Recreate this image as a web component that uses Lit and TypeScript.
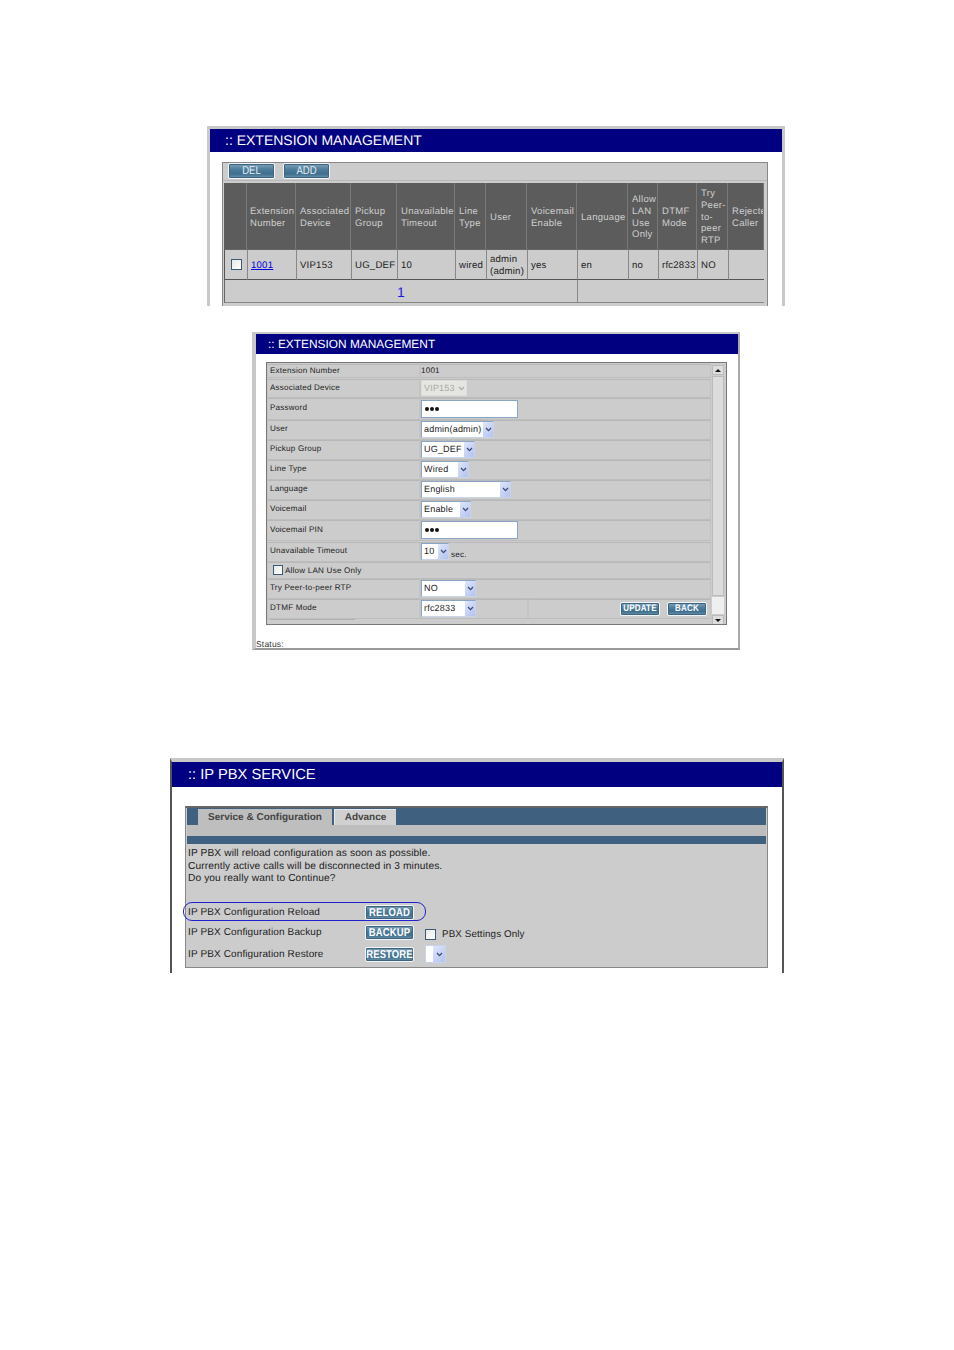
import { LitElement, html, css, TemplateResult } from "lit";
import { customElement } from "lit/decorators.js";

const chevron = html`<svg class="chev" viewBox="0 0 8 6" width="8" height="6"><path d="M1 1.2 L4 4.4 L7 1.2" fill="none" stroke="#3a4a78" stroke-width="1.5"/></svg>`;

function sel(text: string, w: number, h: number, disabled = false) {
  return html`<div class="sel ${disabled ? "off" : ""}" style="width:${w}px;height:${h}px"><span class="sv">${text}</span><span class="arrow">${chevron}</span></div>`;
}
const pwd = (h: number) => html`<div class="pwd" style="height:${h}px"><span class="dots"><i></i><i></i><i></i></span></div>`;
const btn = (t: string) => html`<div class="btn"><span>${t}</span></div>`;

const heads: string[] = ["", "Extension Number", "Associated Device", "Pickup Group", "Unavailable Timeout", "Line Type", "User", "Voicemail Enable", "Language", "Allow LAN Use Only", "DTMF Mode", "Try Peer-to-peer RTP", "Rejected Caller"];
const cells: string[] = ["VIP153", "UG_DEF", "10", "wired", "admin (admin)", "yes", "en", "no", "rfc2833", "NO", ""];

@customElement("app-root")
export class AppRoot extends LitElement {
  static styles = css`
    :host { display: block; width: 954px; height: 1350px; background: #fff; overflow: hidden; text-rendering: geometricPrecision;
      font-family: "Liberation Sans", Arial, sans-serif; color: #222; }
    .page { padding-top: 126px; }
    .frame { box-sizing: border-box; background: #fff; overflow: hidden; position: relative; }
    .f1 { margin-left: 207px; width: 578px; height: 180px; border: solid #c8c8c8; border-width: 3px 3px 0 3px; }
    .f2 { margin-left: 252px; margin-top: 26px; width: 488px; height: 318px; border: solid #c8c8c8; border-width: 2px 2px 2px 4px; border-bottom-color: #999; border-right-color: #aaa; }
    .f3 { margin-left: 170px; margin-top: 108px; width: 614px; height: 215px; border: solid #555; border-width: 4px 2px 0 2px; border-top-color: #c8c8c8; overflow: visible; }
    .title { background: #000080; color: #fff; display: flex; align-items: center; white-space: nowrap; box-sizing: border-box; }
    .f1 .title { height: 23px; padding: 0 0 1px 15px; font-size: 14px; }
    .f2 .title { height: 20px; padding: 0 0 1px 12px; font-size: 11.9px; }
    .f3 .title { height: 25px; padding-left: 16px; font-size: 14.7px; }
    .btn { box-sizing: border-box; display: flex; align-items: center; justify-content: center; color: #fff; font-size: 9.5px; font-weight: bold; white-space: nowrap;
      background: linear-gradient(#7fa2b8, #4d7c9a 40%, #3f6f8e 70%, #6a93ac); border: 1px solid #f2f5f7; border-radius: 2px; box-shadow: inset 0 0 0 1px #3f6480; }
    .btn span { display: block; transform: scaleY(1.2); }
    .cb { box-sizing: border-box; width: 11px; height: 11px; border: 1px solid #3c5a78; background: linear-gradient(135deg, #e8e8e4, #fff); display: block; flex: none; }

    .p1 { margin: 10px 0 0 12px; width: 546px; height: 144px; box-sizing: border-box; background: #ccc; border: 1px solid #888; border-bottom: 0; }
    .tools { height: 17px; padding-top: 0; display: flex; gap: 8px; padding-left: 5px; border-bottom: 1px solid #b8b8b8; }
    .tools .btn { width: 47px; height: 16px; font-weight: normal; font-size: 9.5px; color: #e6edf2; }
    .tbl { margin: 2px 0 0 1px; width: 540px; display: grid; grid-template-columns: 23px 49px 55px 46px 58px 31px 41px 50px 51px 30px 39px 31px 36px; grid-template-rows: 66px 31px 23px; }
    .th { background: #5c5c5c; color: #cfcfcf; font-size: 9.5px; line-height: 11.9px; letter-spacing: .28px; padding: 3px 0 0 4px; display: flex; align-items: center; border-right: 1px solid #787878; overflow: hidden; box-sizing: border-box; }
    .th:nth-child(2) { padding-left: 3px; }
    .th:last-child { border-right: 0; }
    .th.n { white-space: pre; }
    .td { font-size: 9.6px; letter-spacing: .22px; line-height: 11.5px; padding: 2px 0 0 3px; display: flex; align-items: center; box-sizing: border-box; border-left: 1px solid #888; border-top: 1px solid #666; border-bottom: 1px solid #555; overflow: hidden; }
    .td.first { border-left: 1px solid #555; justify-content: center; padding: 0; }
    .td a { color: #0000e0; text-decoration: underline; }
    .pg { border: 0; border-bottom: 1px solid #888; border-left: 1px solid #666; display: flex; align-items: center; justify-content: center; color: #1a1ae0; font-size: 14px; box-sizing: border-box; padding-top: 2px; }
    .pg1 { grid-column: 1 / span 8; }
    .pg2 { grid-column: 9 / span 5; border-left: 1px solid #888; }

    .p2 { margin: 8px 0 0 10px; width: 461px; height: 263px; box-sizing: border-box; background: #ccc; border: 1px solid #777; display: flex; overflow: hidden; padding: 1px 0 0 0; }
    .rows { width: 444px; display: flex; flex-direction: column; flex: none; }
    .r { display: grid; grid-template-columns: 153px 1fr; gap: 0; margin-bottom: 1px; font-size: 8.1px; letter-spacing: .2px; flex: none; }
    .r.tight { margin-bottom: 0; }
    .c { box-sizing: border-box; border: 1px solid; border-color: #b8b8b8 #c4c4c4 #bdbdbd #c4c4c4; display: flex; align-items: center; padding: 0 0 3px 2px; gap: 2px; min-width: 0; }
    .c.v { padding: 0 0 1px 0; }
    .r.keep .c, .r.one .c { padding-bottom: 1px; }
    .r.one { grid-template-columns: 1fr; }
    .r.one .c { padding-left: 5px; gap: 2px; }
    .r.one .cb { width: 10px; height: 10px; }
    .r.three { grid-template-columns: 153px 108px 1fr; }
    .r.three .act { justify-content: flex-end; gap: 7px; padding: 0 3px 1px 0; }
    .r.three .btn { width: 40px; height: 14px; font-size: 8px; }
    .stub { margin-left: 3px; width: 85px; height: 0; border-top: 1px solid #b0b0b0; }
    .sec { align-self: flex-end; padding-bottom: 1px; }
    .sel { box-sizing: border-box; background: #fff; border: 1px solid #8aa6c4; border-color: #8aa6c4 #c8d4e8 #c8d4e8 #8aa6c4; display: flex; align-items: stretch; font-size: 9px; letter-spacing: .2px; color: #222; }
    .sv { flex: 1; padding: 0 0 1px 2px; display: flex; align-items: center; overflow: hidden; white-space: nowrap; }
    .arrow { width: 10px; flex: none; background: linear-gradient(135deg, #dfe6fb, #b3c3f0); display: flex; align-items: center; justify-content: center; }
    .chev { display: block; width: 7px; height: 5px; }
    .sel.off { background: #e6e6e0; border-color: #ddd; color: #a8a8a8; }
    .sel.off .arrow { background: #e4e4e0; }
    .sel.off path { stroke: #aaa; }
    .pwd { box-sizing: border-box; width: 97px; background: #fff; border: 1px solid #8aa6c4; display: flex; align-items: center; padding-left: 3px; }
    .dots { display: flex; gap: 1px; }
    .dots i { width: 4px; height: 4px; border-radius: 50%; background: #111; display: block; }
    .sb { margin: 1px 0 0 1px; width: 12px; display: flex; flex-direction: column; flex: none; gap: 1px; }
    .sbb { height: 10px; background: #ddd; display: flex; align-items: center; justify-content: center; flex: none; border: 1px solid #bbb; box-sizing: border-box; }
    .sbb b { display: block; width: 0; height: 0; border: 3px solid transparent; }
    .up b { border-bottom: 3px solid #111; border-top: 0; }
    .dn b { border-top: 3px solid #111; border-bottom: 0; }
    .track { height: 220px; background: #dcdcdc; border: 1px solid #bbb; box-sizing: border-box; flex: none; }
    .thumb { height: 17px; background: #efefef; flex: none; }
    .status { margin: 14px 0 0 0; font-size: 8.5px; letter-spacing: .2px; color: #333; line-height: 10px; }

    .p3 { position: relative; margin: 19px 0 0 13px; width: 583px; height: 162px; box-sizing: border-box; background: #ccc; border: 1px solid #888; border-top: 2px solid #666; padding: 0 1px; }
    .band { height: 17px; background: #406080; display: flex; padding-left: 11px; align-items: flex-end; gap: 2px; }
    .tab { height: 16px; display: flex; align-items: center; justify-content: center; font-size: 10px; font-weight: bold; color: #444; box-sizing: border-box; }
    .tab.a { width: 134px; background: #bebebe; }
    .tab.b { width: 62px; background: #d0d0d0; border-top: 1px solid #e8e8e8; border-left: 1px solid #e8e8e8; }
    .gap { height: 11px; background: #bebebe; }
    .bar { height: 8px; background: #406080; }
    .msg { margin: 4px 0 0 1px; font-size: 10.2px; letter-spacing: .1px; line-height: 12.5px; color: #222; height: 38px; }
    .acts { margin-top: 19px; display: grid; grid-template-columns: 177px 60px 1fr; grid-template-rows: 14px 14px 18px; row-gap: 6px; font-size: 10px; letter-spacing: .12px; padding-left: 1px; }
    .acts .btn { width: 49px; font-size: 9.5px; align-self: center; height: 15px; }
    .lb { display: flex; align-items: center; padding-top: 1px; }
    .extra { display: flex; align-items: center; gap: 6px; padding-top: 4px; font-size: 9.8px; }
    .ring { position: absolute; left: -3px; top: 94px; width: 243px; height: 19px; box-sizing: border-box; border: 1px solid #2222cc; border-radius: 9px; }
    .blank { box-sizing: border-box; width: 21px; height: 18px; background: #fff; border: 1px solid #c8d4e8; display: flex; justify-content: flex-end; }
    .blank .arrow { width: 12px; }
  `;

  private row(label: string, h: number, ctl: TemplateResult | string, extra = "") {
    return html`<div class="r ${extra}" style="height:${h}px"><div class="c">${label}</div><div class="c v">${ctl}</div></div>`;
  }

  render() {
    return html`<div class="page">
      <section class="frame f1">
        <div class="title">:: EXTENSION MANAGEMENT</div>
        <div class="p1">
          <div class="tools">${btn("DEL")}${btn("ADD")}</div>
          <div class="tbl">
            ${heads.map((t, i) => html`<div class="th ${i === 12 ? "n" : ""}">${i === 12 ? "Rejected\nCaller" : i === 11 ? html`<span>Try<br>Peer-<br>to-<br>peer<br>RTP</span>` : html`<span>${t}</span>`}</div>`)}
            <div class="td first"><span class="cb"></span></div>
            <div class="td"><a>1001</a></div>
            ${cells.map((c) => html`<div class="td"><span>${c}</span></div>`)}
            <div class="pg pg1">1</div>
            <div class="pg pg2"></div>
          </div>
        </div>
      </section>

      <section class="frame f2">
        <div class="title">:: EXTENSION MANAGEMENT</div>
        <div class="p2">
          <div class="rows">
            ${this.row("Extension Number", 14, "1001", "keep")}
            ${this.row("Associated Device", 18, sel("VIP153", 46, 16, true))}
            ${this.row("Password", 22, pwd(18), "tight")}
            ${this.row("User", 20, sel("admin(admin)", 73, 17), "tight")}
            ${this.row("Pickup Group", 20, sel("UG_DEF", 54, 17), "tight")}
            ${this.row("Line Type", 20, sel("Wired", 48, 17), "tight")}
            ${this.row("Language", 20, sel("English", 90, 17), "tight")}
            ${this.row("Voicemail", 20, sel("Enable", 50, 17), "tight")}
            ${this.row("Voicemail PIN", 21, pwd(18))}
            ${this.row("Unavailable Timeout", 20, html`${sel("10", 28, 17)}<span class="sec">sec.</span>`, "tight")}
            <div class="r one tight" style="height:17px"><div class="c"><span class="cb"></span>Allow LAN Use Only</div></div>
            ${this.row("Try Peer-to-peer RTP", 20, sel("NO", 55, 17), "tight")}
            <div class="r three tight" style="height:20px">
              <div class="c">DTMF Mode</div>
              <div class="c v">${sel("rfc2833", 55, 17)}</div>
              <div class="c act">${btn("UPDATE")}${btn("BACK")}</div>
            </div>
            <div class="r one tight" style="height:7px"><div class="stub"></div></div>
          </div>
          <div class="sb">
            <div class="sbb up"><b></b></div>
            <div class="track"></div>
            <div class="thumb"></div>
            <div class="sbb dn"><b></b></div>
          </div>
        </div>
        <div class="status">Status:</div>
      </section>

      <section class="frame f3">
        <div class="title">:: IP PBX SERVICE</div>
        <div class="p3">
          <div class="band"><div class="tab a">Service &amp; Configuration</div><div class="tab b">Advance</div></div>
          <div class="gap"></div>
          <div class="bar"></div>
          <div class="msg">IP PBX will reload configuration as soon as possible.<br>Currently active calls will be disconnected in 3 minutes.<br>Do you really want to Continue?</div>
          <div class="acts">
            <div class="lb">IP PBX Configuration Reload</div>${btn("RELOAD")}<div></div>
            <div class="lb">IP PBX Configuration Backup</div>${btn("BACKUP")}
            <div class="extra"><span class="cb"></span>PBX Settings Only</div>
            <div class="lb">IP PBX Configuration Restore</div>${btn("RESTORE")}
            <div class="blank"><span class="arrow">${chevron}</span></div>
          </div>
          <div class="ring"></div>
        </div>
      </section>
    </div>`;
  }
}
